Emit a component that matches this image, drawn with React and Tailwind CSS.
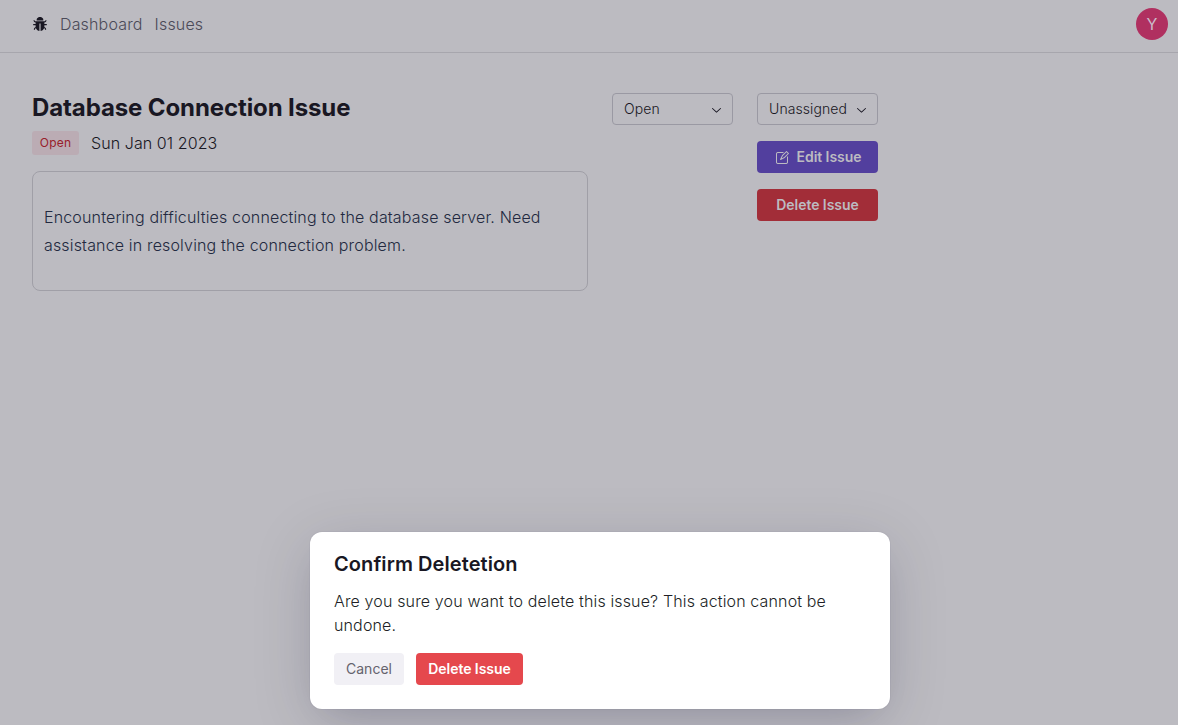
import { AiFillBug } from "react-icons/ai";

function Chevron() {
  return (
    <svg width="15" height="15" viewBox="0 0 15 15" className="h-[15px] w-[15px]" fill="#191723">
      <path fillRule="evenodd" clipRule="evenodd" d="M3.13523 6.15803C3.3241 5.95657 3.64052 5.94637 3.84197 6.13523L7.5 9.56464L11.158 6.13523C11.3595 5.94637 11.6759 5.95657 11.8648 6.15803C12.0536 6.35949 12.0434 6.67591 11.842 6.86477L7.84197 10.6148C7.64964 10.7951 7.35036 10.7951 7.15803 10.6148L3.15803 6.86477C2.95657 6.67591 2.94637 6.35949 3.13523 6.15803Z" />
    </svg>
  );
}

function Pencil() {
  return (
    <svg width="15" height="15" viewBox="0 0 15 15" fill="currentColor">
      <path fillRule="evenodd" clipRule="evenodd" d="M12.1464 1.14645C12.3417 0.951184 12.6583 0.951184 12.8535 1.14645L14.8535 3.14645C15.0488 3.34171 15.0488 3.65829 14.8535 3.85355L10.9109 7.79618C10.8349 7.87218 10.7471 7.93543 10.651 7.9835L6.72359 9.94721C6.53109 10.0435 6.29861 10.0057 6.14643 9.85355C5.99425 9.70137 5.95652 9.46889 6.05277 9.27639L8.01648 5.34897C8.06455 5.25286 8.1278 5.16507 8.2038 5.08907L12.1464 1.14645ZM12.5 2.20711L8.91091 5.79618L7.87266 7.87267L8.12731 8.12732L10.2038 7.08907L13.7929 3.5L12.5 2.20711ZM9.99998 2L8.99998 3H4.9C4.47171 3 4.18056 3.00039 3.95552 3.01877C3.73631 3.03668 3.62421 3.06915 3.54601 3.10899C3.35785 3.20487 3.20487 3.35785 3.10899 3.54601C3.06915 3.62421 3.03669 3.73631 3.01878 3.95552C3.00039 4.18056 3 4.47171 3 4.9V11.1C3 11.5283 3.00039 11.8194 3.01878 12.0445C3.03669 12.2637 3.06915 12.3758 3.10899 12.454C3.20487 12.6422 3.35785 12.7951 3.54601 12.891C3.62421 12.9309 3.73631 12.9633 3.95552 12.9812C4.18056 12.9996 4.47171 13 4.9 13H11.1C11.5283 13 11.8194 12.9996 12.0445 12.9812C12.2637 12.9633 12.3758 12.9309 12.454 12.891C12.6422 12.7951 12.7951 12.6422 12.891 12.454C12.9309 12.3758 12.9633 12.2637 12.9812 12.0445C12.9996 11.8194 13 11.5283 13 11.1V6.99998L14 5.99998V11.1V11.1207C14 11.5231 14 11.8553 13.9779 12.1259C13.9549 12.407 13.9057 12.6653 13.782 12.908C13.5903 13.2843 13.2843 13.5903 12.908 13.782C12.6653 13.9057 12.407 13.9549 12.1259 13.9779C11.8553 14 11.5231 14 11.1207 14H11.1H4.9H4.87934C4.47686 14 4.14468 14 3.87409 13.9779C3.59304 13.9549 3.33469 13.9057 3.09202 13.782C2.7157 13.5903 2.40973 13.2843 2.21799 12.908C2.09434 12.6653 2.04506 12.407 2.0221 12.1259C1.99999 11.8553 1.99999 11.5231 2 11.1207V11.1V4.9V4.87935C1.99999 4.47687 1.99999 4.14469 2.0221 3.87409C2.04506 3.59304 2.09434 3.33469 2.21799 3.09202C2.40973 2.71569 2.7157 2.40973 3.09202 2.21799C3.33469 2.09434 3.59304 2.04506 3.87409 2.0221C4.14469 1.99999 4.47687 1.99999 4.87935 2H4.9H9.99998Z" />
    </svg>
  );
}

function Select({ children }) {
  return (
    <button className="flex h-8 w-[121px] items-center justify-between rounded border border-[#9a99a3] pl-[11px] pr-2 text-sm font-light tracking-[0.006em] text-[#191723]">
      {children}
      <Chevron />
    </button>
  );
}

export default function App() {
  return (
    <div className="relative h-[725px] w-full overflow-hidden bg-[#bcbbc1] font-['Inter',sans-serif] text-[#191723]">
      <nav className="flex h-[53px] items-center border-b border-[#a7a6ad] pb-1 pl-8 pr-[10px]">
        <AiFillBug size={16} />
        <div className="ml-3 flex gap-3 text-base font-light tracking-[0.01em] text-[#4b4a58]">
          <a>Dashboard</a>
          <a>Issues</a>
        </div>
        <div className="ml-auto flex h-8 w-8 items-center justify-center rounded-full bg-[#b03060] text-base text-[#cbbcca]">Y</div>
      </nav>
      <main className="flex gap-6 px-8 pt-10">
        <section className="w-[556px]">
          <h1 className="text-2xl leading-[30px] font-bold tracking-[-0.0045em]">Database Connection Issue</h1>
          <div className="mt-2 flex items-center gap-3">
            <span className="flex h-6 w-[47px] items-center justify-center rounded-[3px] bg-[#bbacb4] text-xs tracking-[0.016em] text-[#98202b]">Open</span>
            <span className="text-base font-light tracking-[0.005em]">Sun Jan 01 2023</span>
          </div>
          <div className="mt-4 h-[120px] rounded-lg border border-[#a09fa7] px-[11px] pt-[31px] text-base leading-7 font-light tracking-[0.01em] text-[#222940]">
            Encountering difficulties connecting to the database server. Need assistance in resolving the connection problem.
          </div>
        </section>
        <Select>Open</Select>
        <div className="flex flex-col gap-4">
          <Select>Unassigned</Select>
          <button className="flex h-8 items-center justify-center gap-2 rounded bg-[#523f9e] text-sm font-semibold tracking-[-0.004em] text-[#bcbbc1]">
            <Pencil />Edit Issue
          </button>
          <button className="h-8 rounded bg-[#a22d38] text-sm font-semibold tracking-[-0.004em] text-[#bcbbc1]">Delete Issue</button>
        </div>
      </main>
      <div className="absolute top-[532px] left-[310px] h-[177px] w-[580px] rounded-xl bg-white p-6 pt-[17px] shadow-[0_0_0_1px_rgba(0,0,50,0.03),0_12px_60px_rgba(0,0,50,0.15),0_16px_36px_-20px_rgba(0,0,50,0.15)]">
        <h2 className="text-xl leading-[30px] font-semibold tracking-[0.004em]">Confirm Deletetion</h2>
        <p className="mt-[10px] text-base leading-6 font-light tracking-[0.009em] text-[#211f26]">Are you sure you want to delete this issue? This action cannot be undone.</p>
        <div className="mt-4 flex gap-3">
          <button className="h-8 w-[70px] rounded bg-[#f1f0f5] text-sm text-[#65636d]">Cancel</button>
          <button className="h-8 w-[107px] rounded bg-[#e5484d] text-sm font-semibold tracking-[-0.004em] text-white">Delete Issue</button>
        </div>
      </div>
    </div>
  );
}
